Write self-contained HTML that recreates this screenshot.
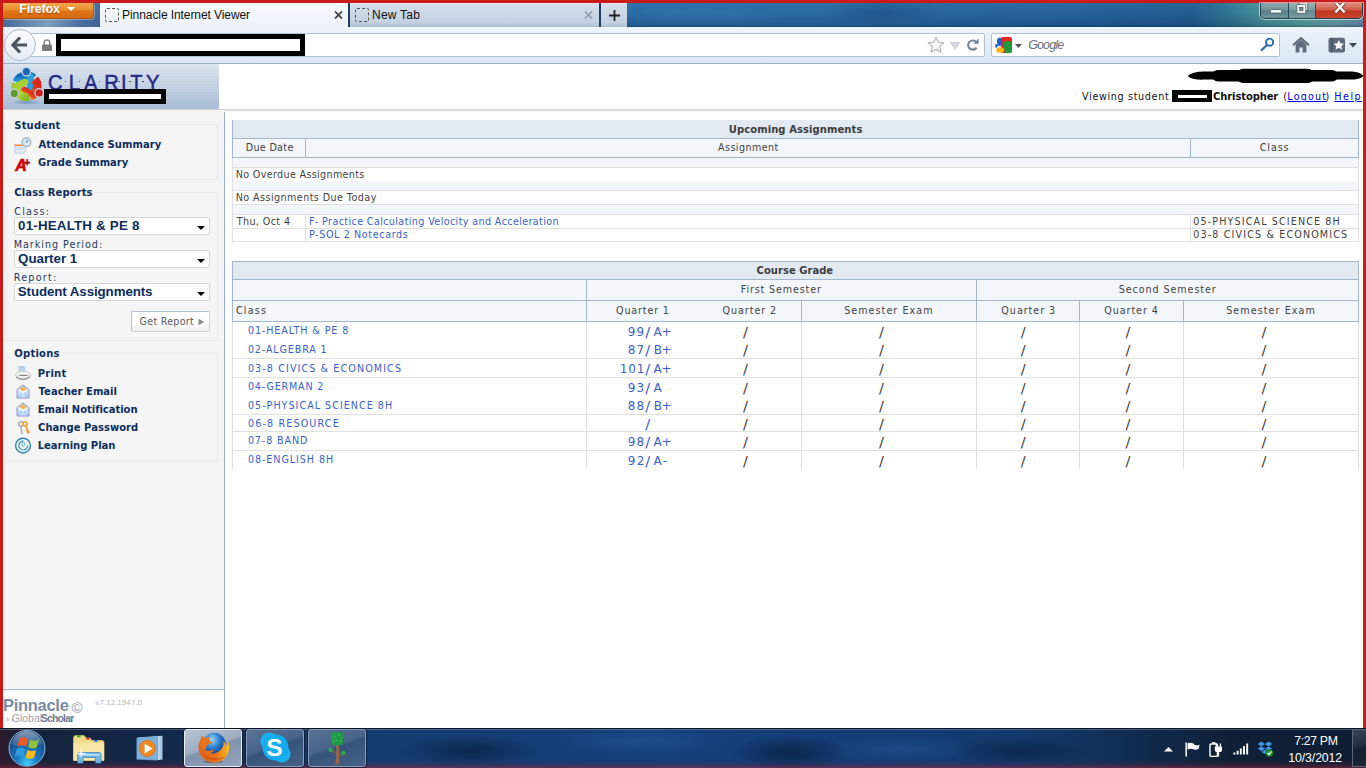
<!DOCTYPE html>
<html><head><meta charset="utf-8"><title>Pinnacle Internet Viewer</title>
<style>
*{box-sizing:border-box;margin:0;padding:0}
html,body{width:1366px;height:768px;overflow:hidden;background:#fff}
body{position:relative;font-family:"DejaVu Sans","Liberation Sans",sans-serif;font-size:10px;color:#333}
div,svg,span.t,i{position:absolute}
span.t{white-space:pre;display:block}
#frame{left:0;top:0;width:1366px;height:768px;background:#cb1a1a}
#titlebar{left:3px;top:3px;width:1360px;height:24px;background:linear-gradient(rgba(255,255,255,.04),rgba(0,0,0,0) 40%,rgba(0,20,50,.18) 92%,rgba(0,20,50,.45)),radial-gradient(ellipse 60px 14px at 880px 8px,rgba(20,70,120,.5),rgba(20,70,120,0)),radial-gradient(ellipse 90px 12px at 700px 14px,rgba(60,130,190,.35),rgba(60,130,190,0)),linear-gradient(90deg,#2a69a2 0,#2b6da6 30%,#2a6aa3 60%,#24619a 80%,#235d90 87.5%,#2d7393 90%,#4a9599 93%,#5ea4a2 96%,#6aa2a8 98%,#6b8eab 100%)}
#navbar{left:3px;top:27px;width:1360px;height:37px;background:linear-gradient(#eef4fb,#e4edf8 40%,#dbe7f5);border-bottom:1px solid #9fb0c6}
#page{left:3px;top:64px;width:1360px;height:664px;background:#fff}
/* ---------- browser chrome ---------- */
#ffbtn{left:3px;top:3px;width:91px;height:16px;border-radius:0 0 4px 0;background:linear-gradient(#f1a84d,#e88e2e 45%,#dd7418 55%,#d96b11);border-right:1px solid #b9591a;border-bottom:1px solid #a8500f;box-shadow:1px 1px 0 rgba(255,255,255,.35)}
#ffbtn i{left:64px;top:4px;border:4px solid transparent;border-top:4.5px solid #fff;border-bottom:0;width:0;height:0}
#ffunder{left:3px;top:19px;width:97px;height:8px;background:linear-gradient(90deg,#47699a,#7f9dbd 45%,#4a6f9f 80%,#3d6294)}
.tab{top:3px;height:24px}
#tab1{left:100px;width:248px;background:linear-gradient(#f6f9fd,#ecf2f9)}
#tab2{left:350px;width:249px;background:linear-gradient(#d4deea,#c5d1e0 80%,#afbdce);border-top:1px solid #e4ebf3}
#tab3{left:601px;width:26px;background:linear-gradient(#d4deea,#c5d1e0 80%,#afbdce);border-top:1px solid #e4ebf3}
.tsep{top:3px;width:2px;height:24px;background:#1d3d63}
.fav{left:5px;top:5px;width:14px;height:14px;border:1px dashed #555;border-radius:2px}
#urlbar{left:26px;top:33px;width:959px;height:24px;background:#fff;border:1px solid #b4c1d2;border-radius:2px}
#back{left:4px;top:29px;width:32px;height:32px;border-radius:50%;background:linear-gradient(#fbfcfe,#e6edf6);border:1px solid #aebaca}
#searchbox{left:991px;top:33px;width:289px;height:24px;background:#fff;border:1px solid #b4c1d2;border-radius:2px}
.blk{background:#000}
.wht{background:#fff}
/* window buttons */
#winbtns{left:1260px;top:3px;width:103px;height:16px;border:1px solid rgba(20,40,60,.75);border-top:0;border-radius:0 0 5px 5px;box-shadow:0 0 0 1px rgba(255,255,255,.55);overflow:hidden}
#winbtns div{top:0;height:15px}
/* ---------- page ---------- */
#hdr{left:3px;top:64px;width:216px;height:45px;background:repeating-linear-gradient(rgba(255,255,255,.10) 0,rgba(255,255,255,.10) 1px,rgba(255,255,255,0) 1px,rgba(255,255,255,0) 2px),linear-gradient(#d8e1eb,#c3d1e2 45%,#a2b8d4)}
#hdrshadow{left:3px;top:109px;width:1360px;height:3px;background:linear-gradient(#c4c4c4,#e6e6e6 50%,#fafafa)}
#side{left:3px;top:110px;width:221px;height:579px;background:#f5f5f5}
#sideline{left:224px;top:112px;width:1px;height:616px;background:#9aadc8}
#sidebot{left:3px;top:689px;width:221px;height:1px;background:#a6b8d0}
.fs{left:6px;width:212px;border:1px solid #ebebeb}
.sel{left:14px;width:196px;height:18px;background:#fff;border:1px solid #d6d6d6;border-radius:2px}
.sel i{right:4px;top:8px;width:0;height:0;border:4px solid transparent;border-top:4px solid #000;border-bottom:0}
#getrep{left:131px;top:311px;width:79px;height:21px;background:linear-gradient(#fff,#fff 55%,#eee);border:1px solid #b5bec9;border-right-color:#d3d3d3;border-bottom-color:#cfcfcf;border-radius:2px}
.hl{height:1px}
.vl{width:1px}
/* ---------- taskbar ---------- */
#taskbar{left:0;top:728px;width:1366px;height:40px;background:linear-gradient(rgba(0,0,0,0) 0,rgba(0,0,0,0) 80%,rgba(130,35,60,.25) 92%,rgba(150,40,60,.55) 100%),radial-gradient(ellipse 70px 16px at 470px 22px,rgba(8,30,62,.7),rgba(8,30,62,0)),radial-gradient(ellipse 90px 14px at 640px 12px,rgba(40,95,160,.45),rgba(40,95,160,0)),radial-gradient(ellipse 60px 18px at 790px 24px,rgba(8,30,62,.75),rgba(8,30,62,0)),radial-gradient(ellipse 80px 14px at 900px 20px,rgba(40,95,160,.4),rgba(40,95,160,0)),radial-gradient(ellipse 70px 16px at 1020px 22px,rgba(8,30,62,.65),rgba(8,30,62,0)),linear-gradient(90deg,#2a1a2c 0,#13233b 2.5%,#13294b 12%,#143c70 27%,#14407a 50%,#133a6e 75%,#102a4c 84%,#0f2036 90%,#101e33 100%);border-top:1px solid #0b1420;box-shadow:inset 0 1px 0 rgba(140,160,190,.45)}
.tb{top:729px;height:38px;border-radius:3px}
</style></head><body>
<div id="frame"></div>
<div id="titlebar"></div>
<div id="navbar"></div>
<div id="page"></div>
<div id="ffunder"></div><div style="left:94px;top:3px;width:6px;height:24px;background:linear-gradient(#4a6e9e,#3f6395)"></div>
<div id="ffbtn"><i></i></div>
<div id="tab1" class="tab"><div class="fav"></div>
<svg style="left:234px;top:8px" width="9" height="8" viewBox="0 0 9 8"><path d="M1 .5L8 7.5M8 .5L1 7.5" stroke="#3a3a3a" stroke-width="1.7" fill="none"/></svg></div>
<div class="tsep" style="left:348px"></div>
<div id="tab2" class="tab"><div class="fav" style="top:4px"></div>
<svg style="left:234px;top:7px" width="9" height="8" viewBox="0 0 9 8"><path d="M1 .5L8 7.5M8 .5L1 7.5" stroke="#8d99a8" stroke-width="1.5" fill="none"/></svg></div>
<div class="tsep" style="left:599px"></div>
<div id="tab3" class="tab"><svg style="left:8px;top:6px" width="11" height="11" viewBox="0 0 11 11"><path d="M5.5 0V11M0 5.5H11" stroke="#222" stroke-width="1.8"/></svg></div>
<div id="winbtns">
<div style="left:0;width:27px;background:linear-gradient(#8fa9ae,#6e8f98 48%,#587e8a 52%,#6d949a)"></div>
<div style="left:27px;width:1px;background:rgba(20,40,60,.7)"></div>
<div style="left:28px;width:26px;background:linear-gradient(#9ab4b6,#779a9f 48%,#5f878f 52%,#78a0a3)"></div>
<div style="left:54px;width:1px;background:rgba(20,40,60,.7)"></div>
<div style="left:55px;width:47px;background:linear-gradient(#e08c7c,#cf5a45 48%,#bf3520 52%,#c9482f)"></div>
<svg style="left:9px;top:6px" width="12" height="5" viewBox="0 0 12 5"><rect x=".5" y=".5" width="11" height="3.6" rx=".8" fill="#f4f4f0" stroke="#4a5a66" stroke-width=".8"/></svg>
<svg style="left:35px;top:0" width="13" height="12" viewBox="0 0 13 12"><rect x="3.2" y="-1" width="8.6" height="8.4" fill="#eef0ee" stroke="#4a5a66" stroke-width=".8"/><rect x=".8" y="1.4" width="9" height="9" rx=".8" fill="#f4f4f0" stroke="#4a5a66" stroke-width=".8"/><rect x="3.6" y="4.4" width="3.4" height="3.2" fill="#6a8c94" stroke="#4a5a66" stroke-width=".7"/></svg>
<svg style="left:72px;top:-1px" width="14" height="12" viewBox="0 0 14 12"><path d="M2.4 .2L11.6 10.4M11.6 .2L2.4 10.4" stroke="#5a3a38" stroke-width="3.8"/><path d="M2.4 .2L11.6 10.4M11.6 .2L2.4 10.4" stroke="#f6f4f0" stroke-width="2.4"/></svg>
</div>
<div id="urlbar"></div>
<div id="back"></div>
<svg style="left:11px;top:36px" width="17" height="18" viewBox="0 0 17 18"><path d="M9 1.5L2 9L9 16.5M2.5 9H16" stroke="#4b5663" stroke-width="3.2" fill="none" stroke-linejoin="miter"/></svg>
<svg style="left:42px;top:39px" width="10" height="12" viewBox="0 0 10 12"><path d="M2.2 6V3.8a2.8 2.8 0 0 1 5.6 0V6" stroke="#8a8a8a" stroke-width="1.6" fill="none"/><rect x="0" y="5.5" width="10" height="6.5" rx="1" fill="#7b7b7b"/></svg>
<div class="blk" style="left:56px;top:34px;width:249px;height:22px"></div>
<div class="wht" style="left:61px;top:39px;width:239px;height:12px"></div>
<svg style="left:927px;top:36px" width="18" height="18" viewBox="0 0 18 18"><path d="M9 1.2l2.35 5.1 5.55.6-4.15 3.75 1.2 5.5L9 13.3l-4.95 2.85 1.2-5.5L1.1 6.9l5.55-.6z" fill="#f6f6f6" stroke="#b4b4b4" stroke-width="1.1" stroke-linejoin="round"/></svg>
<svg style="left:950px;top:42px" width="10" height="8" viewBox="0 0 10 8"><path d="M.5 .5h9L5 7.5z" fill="#d5dbe2" stroke="#b9c1cb" stroke-width=".8"/></svg>
<svg style="left:966px;top:38px" width="14" height="14" viewBox="0 0 14 14"><path d="M10.6 9.6A4.6 4.6 0 1 1 10.2 4" stroke="#76869a" stroke-width="2.1" fill="none"/><path d="M7.2 5.8H12.6V.6z" fill="#76869a"/></svg>
<div id="searchbox"></div>
<svg style="left:995px;top:37px" width="18" height="16" viewBox="0 0 18 16"><rect x="6" y="0" width="11" height="16" rx="2" fill="#e8261e"/><path d="M8 6.5a5 5 0 0 1 9 0V14a2 2 0 0 1-2 2H10z" fill="#1a9a3c"/><ellipse cx="4.6" cy="4.8" rx="2.6" ry="4.2" fill="#2060c8" transform="rotate(-8 4.6 4.8)"/><path d="M.4 6.5L4 8.8.4 11.2z" fill="#2060c8"/><ellipse cx="5.2" cy="13" rx="4" ry="2.8" fill="#f2b417"/></svg>
<svg style="left:1015px;top:44px" width="7" height="4" viewBox="0 0 7 4"><path d="M0 0h7L3.5 4z" fill="#555"/></svg>
<svg style="left:1260px;top:37px" width="15" height="15" viewBox="0 0 15 15"><circle cx="9.6" cy="5.2" r="3.6" stroke="#2b6cb0" stroke-width="1.9" fill="none"/><path d="M7 8L1 13.6" stroke="#2b6cb0" stroke-width="2.2" stroke-linecap="butt"/></svg>
<svg style="left:1292px;top:37px" width="18" height="16" viewBox="0 0 18 16"><path d="M1 8.2L9 1l8 7.2" stroke="#566474" stroke-width="1.9" fill="none"/><path d="M3.6 7.5L9 2.8l5.4 4.7V15.4H10.6V10.4H7.4V15.4H3.6z" fill="#5e6c7c"/></svg>
<svg style="left:1328px;top:37px" width="18" height="16" viewBox="0 0 18 16"><rect x=".5" y=".8" width="16.5" height="14.6" rx="2" fill="#5d6a79"/><rect x="3.4" y=".8" width="1" height="14.6" fill="#3f4a58"/><path d="M10.8 3l1.55 3.3 3.6.4-2.7 2.45.8 3.55-3.25-1.85L7.55 12.7l.8-3.55L5.65 6.7l3.6-.4z" fill="#fff"/></svg>
<svg style="left:1349px;top:43px" width="8" height="5" viewBox="0 0 8 5"><path d="M0 0h8L4 4.6z" fill="#3c4756"/></svg>
<!-- ================= PAGE ================= -->
<div id="hdr"></div>
<div id="hdrshadow"></div>
<div id="side"></div>
<div id="sideline"></div>
<div id="sidebot"></div>
<svg style="left:0;top:60px" width="60" height="50" viewBox="0 60 60 50"><defs><linearGradient id="gb" x1="0" y1="0" x2="0" y2="1"><stop offset="0" stop-color="#1268b8"/><stop offset="1" stop-color="#2aa8e0"/></linearGradient><linearGradient id="gg" x1="0" y1="0" x2="1" y2="1"><stop offset="0" stop-color="#8cbf2a"/><stop offset=".5" stop-color="#b4d432"/><stop offset="1" stop-color="#7fb82c"/></linearGradient><linearGradient id="gr" x1="0" y1="1" x2="1" y2="0"><stop offset="0" stop-color="#f08a1c"/><stop offset=".45" stop-color="#e63a1e"/><stop offset="1" stop-color="#d8261c"/></linearGradient><radialGradient id="gs"><stop offset="0" stop-color="#5f83b5" stop-opacity=".75"/><stop offset="1" stop-color="#5f83b5" stop-opacity="0"/></radialGradient></defs><ellipse cx="26.5" cy="102.3" rx="16" ry="2.6" fill="url(#gs)"/><path d="M16.66 82.08A10.8 10.8 0 0 1 33.40 77.91" stroke="url(#gb)" stroke-width="8.4" fill="none"/><path d="M30.65 76.29Q30.60 83.30 30.00 87.50" stroke="#2aa0dc" stroke-width="6.6" fill="none" stroke-linecap="round"/><path d="M34.75 79.21A10.8 10.8 0 0 1 29.94 96.57" stroke="url(#gr)" stroke-width="8.4" fill="none"/><path d="M32.79 95.15Q27.60 92.30 24.40 89.90" stroke="url(#gr)" stroke-width="6.6" fill="none" stroke-linecap="round"/><path d="M28.85 96.86A10.8 10.8 0 0 1 16.12 83.69" stroke="url(#gg)" stroke-width="8.4" fill="none"/><path d="M15.81 86.68Q21.60 83.30 25.00 82.10" stroke="#a6cf30" stroke-width="6.6" fill="none" stroke-linecap="round"/><circle cx="26.35" cy="71.70" r="4.9" fill="#c9d6e6"/><circle cx="26.35" cy="71.70" r="3.6" fill="#1468b4"/><circle cx="14.30" cy="93.40" r="4.9" fill="#c9d6e6"/><circle cx="14.30" cy="93.40" r="3.6" fill="#5f9a2a"/><circle cx="39.18" cy="92.88" r="4.9" fill="#c9d6e6"/><circle cx="39.18" cy="92.88" r="3.6" fill="#cc241c"/></svg>
<svg style="left:40px;top:66px" width="125" height="30" viewBox="40 66 125 30"><text transform="scale(.92 1)" x="52.22 74.61 91.35 113.41 131.57 141.57 158.74" y="90.2" font-family="Liberation Sans, sans-serif" font-size="22" fill="#262a86" stroke="#262a86" stroke-width=".5">CLARITY</text></svg>
<div style="left:64.6px;top:80.7px;width:1.8px;height:1.8px;border-radius:50%;background:#3a3e4a"></div>
<div style="left:78.7px;top:80.7px;width:1.8px;height:1.8px;border-radius:50%;background:#3a3e4a"></div>
<div style="left:98.6px;top:80.7px;width:1.8px;height:1.8px;border-radius:50%;background:#3a3e4a"></div>
<div style="left:118.2px;top:80.7px;width:1.8px;height:1.8px;border-radius:50%;background:#3a3e4a"></div>
<div style="left:129.2px;top:80.7px;width:1.8px;height:1.8px;border-radius:50%;background:#3a3e4a"></div>
<div style="left:142.4px;top:80.7px;width:1.8px;height:1.8px;border-radius:50%;background:#3a3e4a"></div>
<div style="left:44px;top:89px;width:122px;height:15px;background:#000;z-index:5"></div>
<div style="left:49px;top:94px;width:112px;height:5px;background:#fff;z-index:6"></div>
<svg style="left:1180px;top:64px" width="183" height="24" viewBox="1180 64 183 24"><path d="M1187.8 75.9Q1192 71.6 1204 71.4H1352Q1360 72 1363 75.5V76.5Q1360 79.6 1350 79.6H1204Q1192 80 1187.8 75.9Z" fill="#000"/><rect x="1212" y="70" width="126" height="11.5" rx="5.7" fill="#000"/><rect x="1237" y="68.7" width="77" height="14.2" rx="6" fill="#000"/></svg>
<div style="left:1172px;top:90px;width:40px;height:12px;background:#000;"></div>
<div style="left:1178px;top:95px;width:29px;height:3px;background:#fff;"></div>
<div class="fs" style="top:124px;height:56px"></div>
<div class="fs" style="top:192px;height:149px"></div>
<div class="fs" style="top:353px;height:109px"></div>
<div style="left:12px;top:120px;width:51px;height:10px;background:#f5f5f5;"></div>
<div style="left:12px;top:188px;width:83px;height:10px;background:#f5f5f5;"></div>
<div style="left:12px;top:349px;width:50px;height:10px;background:#f5f5f5;"></div>
<div class="sel" style="top:217px"><i></i></div>
<div class="sel" style="top:250px"><i></i></div>
<div class="sel" style="top:283px"><i></i></div>
<div id="getrep"></div>
<svg style="left:198px;top:318px" width="7" height="8" viewBox="0 0 7 8"><path d="M.5 .8L6.2 4 .5 7.2z" fill="#8a8a8a"/></svg>
<svg style="left:14px;top:137px" width="19" height="18" viewBox="0 0 19 18"><path d="M.8 8.4H11.5V14.2L9 16.2H.8z" fill="#e4ecf5" stroke="#b5c3d6" stroke-width=".8"/><path d="M.6 8.2H11.6" stroke="#f08a3c" stroke-width="1.5"/><path d="M2.5 11h7M2.5 13h6" stroke="#c3cfdf" stroke-width="1"/><circle cx="12.4" cy="5.2" r="4.4" fill="#cfe7f3" stroke="#a3acb6" stroke-width="1.2"/><path d="M12.3 5.4L14 2.9" stroke="#596470" stroke-width="1"/></svg>
<svg style="left:16px;top:384px" width="14" height="15" viewBox="0 0 14 15"><path d="M1 5.6L7 1 13 5.6V14H1z" fill="#c6e2f8" stroke="#8a8ad8" stroke-width=".9" stroke-linejoin="round"/><path d="M2.6 5.4L7 2.2 11.4 5.4 7 8z" fill="#f3b65a"/><path d="M2.4 6.2L7 9.2 11.6 6.2V4.8L7 7.4 2.4 4.8z" fill="#fff" opacity=".85"/><path d="M1 14L5.6 9.6M13 14L8.4 9.6" stroke="#8a9ae0" stroke-width=".8"/></svg>
<svg style="left:16px;top:402px" width="14" height="15" viewBox="0 0 14 15"><path d="M1 5.6L7 1 13 5.6V14H1z" fill="#c6e2f8" stroke="#8a8ad8" stroke-width=".9" stroke-linejoin="round"/><path d="M2.6 5.4L7 2.2 11.4 5.4 7 8z" fill="#f3b65a"/><path d="M2.4 6.2L7 9.2 11.6 6.2V4.8L7 7.4 2.4 4.8z" fill="#fff" opacity=".85"/><path d="M1 14L5.6 9.6M13 14L8.4 9.6" stroke="#8a9ae0" stroke-width=".8"/></svg>
<svg style="left:15px;top:366px" width="16" height="15" viewBox="0 0 16 15"><path d="M3.4 .6H9.2L10.6 6.4H4.4z" fill="#b9d6f2" stroke="#9fb9d8" stroke-width=".5"/><ellipse cx="8" cy="9" rx="7.4" ry="4" fill="#f1f1f1" stroke="#b5b5b5" stroke-width=".7"/><path d="M1 10.2Q8 15.6 15 10.2V11.6Q8 16.6 1 11.6z" fill="#8c8c8c"/><path d="M4.4 9.4H11.6" stroke="#777" stroke-width="1.1"/><circle cx="12.6" cy="9.6" r=".6" fill="#3a9a3a"/></svg>
<svg style="left:17px;top:421px" width="14" height="14" viewBox="0 0 14 14"><circle cx="3.8" cy="3" r="2.2" fill="none" stroke="#a9aeb6" stroke-width="1.5"/><path d="M4 5.2L4.8 13" stroke="#a9aeb6" stroke-width="1.6"/><circle cx="8" cy="2.8" r="2.1" fill="none" stroke="#f0a92e" stroke-width="1.6"/><path d="M8.6 4.8L12.2 12.2M10.6 9.2L8.8 10.2M11.6 11L10 12" stroke="#ee9f22" stroke-width="1.5"/></svg>
<svg style="left:14px;top:437px" width="18" height="18" viewBox="0 0 18 18"><circle cx="9" cy="8.6" r="7.4" fill="#eef6fa" stroke="#2e86a8" stroke-width="1.4"/><path d="M13.6 8.2A4.4 4.4 0 1 1 9.6 4.2" fill="none" stroke="#3d93b3" stroke-width="1.2"/><circle cx="9.3" cy="7.2" r="1.6" fill="none" stroke="#5aa6c2" stroke-width=".9"/></svg>
<div style="left:232px;top:120px;width:1127px;height:18px;background:#e2e9f1;"></div>
<div style="left:232px;top:139px;width:1127px;height:18px;background:#f3f6fa;"></div>
<div style="left:232px;top:138px;width:1127px;height:1px;background:#a3b7cf;"></div>
<div style="left:232px;top:157px;width:1127px;height:1px;background:#a3b7cf;"></div>
<div style="left:232px;top:120px;width:1px;height:38px;background:#a3b7cf;"></div>
<div style="left:1358px;top:120px;width:1px;height:38px;background:#a3b7cf;"></div>
<div style="left:305px;top:139px;width:1px;height:18px;background:#a3b7cf;"></div>
<div style="left:1190px;top:139px;width:1px;height:18px;background:#a3b7cf;"></div>
<div style="left:233px;top:158px;width:1125px;height:9px;background:#f3f6fa;"></div>
<div style="left:233px;top:181px;width:1125px;height:9px;background:#f3f6fa;"></div>
<div style="left:233px;top:205px;width:1125px;height:9px;background:#f3f6fa;"></div>
<div style="left:232px;top:167px;width:1127px;height:1px;background:#e0e0e0;"></div>
<div style="left:232px;top:190px;width:1127px;height:1px;background:#e0e0e0;"></div>
<div style="left:232px;top:204px;width:1127px;height:1px;background:#e0e0e0;"></div>
<div style="left:232px;top:214px;width:1127px;height:1px;background:#e0e0e0;"></div>
<div style="left:232px;top:228px;width:1127px;height:1px;background:#e0e0e0;"></div>
<div style="left:232px;top:241px;width:1127px;height:1px;background:#e0e0e0;"></div>
<div style="left:232px;top:158px;width:1px;height:84px;background:#e0e0e0;"></div>
<div style="left:1358px;top:158px;width:1px;height:84px;background:#e0e0e0;"></div>
<div style="left:305px;top:215px;width:1px;height:26px;background:#e0e0e0;"></div>
<div style="left:1190px;top:215px;width:1px;height:26px;background:#e0e0e0;"></div>
<div style="left:232px;top:261px;width:1127px;height:18px;background:#e2e9f1;"></div>
<div style="left:232px;top:280px;width:1127px;height:41px;background:#f3f6fa;"></div>
<div style="left:232px;top:261px;width:1127px;height:1px;background:#a3b7cf;"></div>
<div style="left:232px;top:279px;width:1127px;height:1px;background:#a3b7cf;"></div>
<div style="left:232px;top:300px;width:1127px;height:1px;background:#a3b7cf;"></div>
<div style="left:232px;top:321px;width:1127px;height:1px;background:#a3b7cf;"></div>
<div style="left:232px;top:261px;width:1px;height:61px;background:#a3b7cf;"></div>
<div style="left:1358px;top:261px;width:1px;height:61px;background:#a3b7cf;"></div>
<div style="left:586px;top:280px;width:1px;height:41px;background:#a3b7cf;"></div>
<div style="left:976px;top:280px;width:1px;height:41px;background:#a3b7cf;"></div>
<div style="left:801px;top:301px;width:1px;height:20px;background:#a3b7cf;"></div>
<div style="left:1079px;top:301px;width:1px;height:20px;background:#a3b7cf;"></div>
<div style="left:1183px;top:301px;width:1px;height:20px;background:#a3b7cf;"></div>
<div style="left:232px;top:358px;width:1127px;height:1px;background:#e0e0e0;"></div>
<div style="left:232px;top:377px;width:1127px;height:1px;background:#e0e0e0;"></div>
<div style="left:232px;top:414px;width:1127px;height:1px;background:#e0e0e0;"></div>
<div style="left:232px;top:431px;width:1127px;height:1px;background:#e0e0e0;"></div>
<div style="left:232px;top:450px;width:1127px;height:1px;background:#e0e0e0;"></div>
<div style="left:232px;top:322px;width:1px;height:147px;background:#e0e0e0;"></div>
<div style="left:586px;top:322px;width:1px;height:147px;background:#e0e0e0;"></div>
<div style="left:801px;top:322px;width:1px;height:147px;background:#e0e0e0;"></div>
<div style="left:976px;top:322px;width:1px;height:147px;background:#e0e0e0;"></div>
<div style="left:1079px;top:322px;width:1px;height:147px;background:#e0e0e0;"></div>
<div style="left:1183px;top:322px;width:1px;height:147px;background:#e0e0e0;"></div>
<div style="left:1358px;top:322px;width:1px;height:147px;background:#e0e0e0;"></div>
<div id="taskbar"></div>
<div class="tb" style="left:184px;width:58px;background:linear-gradient(160deg,#b9c4d3 0,#9fadc2 45%,#8193ad 50%,#93a4bb 100%);border:1px solid #e9eef5;box-shadow:0 0 0 1px rgba(10,20,40,.6)"></div>
<div class="tb" style="left:246px;width:58px;background:linear-gradient(160deg,#5a7396 0,#48638a 45%,#385379 50%,#46628a 100%);border:1px solid #8a9cb6;box-shadow:0 0 0 1px rgba(10,20,40,.6)"></div>
<div class="tb" style="left:308px;width:58px;background:linear-gradient(160deg,#5a7396 0,#48638a 45%,#385379 50%,#46628a 100%);border:1px solid #8a9cb6;box-shadow:0 0 0 1px rgba(10,20,40,.6)"></div>
<svg style="left:6px;top:728px" width="42" height="40" viewBox="0 0 42 40"><defs><radialGradient id="orb" cx=".5" cy=".92" r=".95"><stop offset="0" stop-color="#3fd0f8"/><stop offset=".3" stop-color="#1c7cc6"/><stop offset=".7" stop-color="#174f92"/><stop offset="1" stop-color="#0f3566"/></radialGradient><linearGradient id="orbh" x1="0" y1="0" x2="0" y2="1"><stop offset="0" stop-color="#fff" stop-opacity=".5"/><stop offset="1" stop-color="#fff" stop-opacity=".05"/></linearGradient></defs>
<circle cx="21" cy="20.2" r="18" fill="url(#orb)" stroke="#8fb4d8" stroke-width="1"/><path d="M5.2 16.4A16 16 0 0 1 36.8 16.4Q21 22 5.2 16.4z" fill="url(#orbh)"/>
<g transform="translate(21 20) scale(1.22) translate(-19.6 -20)"><path d="M13.4 12.2Q17 10 20.4 12.4L18.8 19Q15.4 16.8 11.8 18.8z" fill="#ee5a22"/><path d="M22.2 13Q25.6 15 29.4 13L27.6 19.6Q24 21.4 20.6 19.4z" fill="#8cc43c"/><path d="M11.2 20.6Q14.8 18.6 18.2 20.8L16.6 27.2Q13.2 25 9.6 27z" fill="#2f9be0"/><path d="M20 21.4Q23.4 23.4 27.2 21.6L25.4 28Q21.8 29.8 18.4 27.8z" fill="#f7b81e"/></g></svg>
<svg style="left:72px;top:733px" width="34" height="32" viewBox="0 0 34 32"><path d="M1.5 5.5Q1.5 2.5 4 2.5H12L14 5H18L20 7.5H30Q32 7.5 32 9.5V27.5H1.5z" fill="#f3d98a" stroke="#d8b75a" stroke-width=".8"/><rect x="5" y="2.2" width="3.6" height="2" fill="#19b32a"/><rect x="14.4" y="4.6" width="3" height="2" fill="#d8281e"/><rect x="22.4" y="7" width="3" height="2" fill="#1e7fe0"/><path d="M1.5 10H32V27.5H1.5z" fill="#f7e6a6"/><path d="M5.5 30V21.5Q5.5 19.5 7.5 19.5H27Q29 19.5 29 21.5V30H23.5V24.5H11V30z" fill="#6fb6e6" stroke="#3d88c4" stroke-width=".8"/><path d="M6.5 21.8H28" stroke="#c8e8fa" stroke-width="1.4"/><path d="M9 14L9.8 19.5 15 20.4 9.8 21.2 9 26.5 8.2 21.2 3.4 20.4 8.2 19.5z" fill="#fff" opacity=".9"/></svg>
<svg style="left:136px;top:735px" width="28" height="27" viewBox="0 0 28 27"><path d="M4 2.2L26.5 .8V24.8L4 23.4z" fill="#a8c8e4"/><path d="M2.4 2.6L24 1.4V25L2.4 23.8z" fill="#b9d5ec"/><path d="M.8 3L21.5 2V25.2L.8 24.2z" fill="#7fb0dc" stroke="#5f96c8" stroke-width=".6"/><circle cx="11.4" cy="13.4" r="8" fill="#f28a1e" stroke="#d86a10" stroke-width=".8"/><path d="M8.6 8.4L16.6 13.4 8.6 18.4z" fill="#fff"/></svg>
<svg style="left:197px;top:731px" width="34" height="33" viewBox="0 0 34 33"><defs><radialGradient id="ffg" cx=".4" cy=".3" r=".75"><stop offset="0" stop-color="#9ad8f8"/><stop offset=".45" stop-color="#2f7fd0"/><stop offset="1" stop-color="#0c2f7c"/></radialGradient><linearGradient id="ffo" x1="0" y1="0" x2="1" y2="0"><stop offset="0" stop-color="#e2621a"/><stop offset=".55" stop-color="#e8741a"/><stop offset=".85" stop-color="#f3a01c"/><stop offset="1" stop-color="#f6c428"/></linearGradient></defs>
<ellipse cx="16.5" cy="30.6" rx="10" ry="1.6" fill="#1a2436" opacity=".35"/>
<circle cx="17.2" cy="13.4" r="11.6" fill="url(#ffg)"/>
<path d="M3.6 8.5A15.4 15.4 0 1 0 29.6 7.8Q31 11.5 29.8 15.2 28.6 11.6 26.4 9.8A10.8 10.8 0 0 1 8.6 19.6Q6.6 15 8.8 11.4z" fill="url(#ffo)"/>
<path d="M3.4 10L4.8 4.2 8.2 7.6 12.6 5.6 12 9.6 15.6 11.8 11.4 13.2Q8.6 15.4 8.2 19L3.6 16z" fill="#e9741c"/>
<path d="M8 19.2Q12.4 20.8 15.8 18.4L16.6 20.2Q13 23.8 8.6 22.6z" fill="#e8701a"/>
<path d="M5 22Q10 30 19 29.6 25 29 28.6 24.4 24 27.4 18 27 10 26.6 5 22z" fill="#c8400e" opacity=".55"/></svg>
<svg style="left:259px;top:731px" width="33" height="33" viewBox="0 0 33 33"><circle cx="10" cy="10" r="8.6" fill="#1ab2f2"/><circle cx="23" cy="23" r="8.6" fill="#1ab2f2"/><circle cx="16.5" cy="16.5" r="13" fill="#12aef0"/></svg>
<svg style="left:327px;top:731px" width="20" height="34" viewBox="0 0 20 34"><path d="M9.2 12H12V33H8.4L9.4 26z" fill="#9a6a48"/><path d="M8.6 31.6L6.8 33.4H13.8L12 31.6z" fill="#8a5c3e"/><path d="M9.4 22L5 19.6M11.8 25L15 22.6" stroke="#8a5c3e" stroke-width="1.4"/><path d="M4 5Q4 1 8 1H12.4Q16 1 16 5V10Q16 14.4 12 14.4H8Q4 14.4 4 10z" fill="#1f9a48"/><path d="M6 4.6h2v2H6zM11 3h2v2h-2zM8.6 8h2v2h-2zM12.6 9h2v2h-2zM5.4 10h2v2h-2z" fill="#2fb85c"/><circle cx="3.6" cy="19" r="2.2" fill="#27a64e"/><circle cx="16.4" cy="22" r="2.2" fill="#27a64e"/></svg>
<svg style="left:1164px;top:747px" width="9" height="5" viewBox="0 0 9 5"><path d="M0 4.6L4.5 0 9 4.6z" fill="#fff"/></svg>
<svg style="left:1185px;top:742px" width="16" height="15" viewBox="0 0 16 15"><path d="M1.2 .4V14.6" stroke="#fff" stroke-width="1.5"/><path d="M2.6 1.2Q5.6 .2 8.4 1.6 9 3 11.6 3.4L14.6 2.8 13.6 6.8Q10.6 8.6 8.6 7.2 6 6 2.6 7.4z" fill="#fff"/></svg>
<svg style="left:1209px;top:741px" width="15" height="17" viewBox="0 0 15 17"><rect x="1" y="3" width="7.4" height="12.4" rx="1" fill="none" stroke="#fff" stroke-width="1.4"/><rect x="3" y="1.2" width="3.4" height="1.6" fill="#fff"/><path d="M7.4 2.6V5.4M11.4 2.6V5.4" stroke="#fff" stroke-width="1.4"/><path d="M5.8 5.4H13V8.4Q13 11 10.6 11H8.2Q5.8 11 5.8 8.4z" fill="#fff"/><path d="M9.4 11V15.6" stroke="#fff" stroke-width="1.5"/></svg>
<svg style="left:1233px;top:743px" width="16" height="12" viewBox="0 0 16 12"><path d="M1.4 11.4V9.6M4.6 11.4V7.8M7.8 11.4V5.6M11 11.4V3M14.2 11.4V.6" stroke="#fff" stroke-width="1.9"/></svg>
<svg style="left:1257px;top:741px" width="17" height="16" viewBox="0 0 17 16"><path d="M4.4 .6L8 3 4.4 5.4.8 3zM11.6 .6L15.2 3 11.6 5.4 8 3zM.8 7.6L4.4 5.4 8 7.8 4.4 10.2zM15.2 7.6L11.6 5.4 8 7.8 11.6 10.2zM4.6 11L8 8.8 11.4 11 8 13.2z" fill="#3d9ae8"/><circle cx="12.4" cy="12" r="3.6" fill="#1e9a2c" stroke="#0d6a18" stroke-width=".5"/><path d="M10.6 12L12 13.6 14.4 10.4" stroke="#fff" stroke-width="1.2" fill="none"/></svg>
<div style="left:1352px;top:729px;width:14px;height:38px;background:linear-gradient(160deg,#3a4656 0,#1e2a3a 50%,#141e2c 52%,#1c2636 100%);border:1px solid #5a6676;border-right:0"></div>
<span class="t" style='left:19.21px;top:0.87px;font:normal bold 12.5px/16px "Liberation Sans","DejaVu Sans",sans-serif;color:#fff;letter-spacing:-0.135px;text-shadow:0 1px 1px rgba(120,50,0,.55);'>Firefox</span>
<span class="t" style='left:122.10px;top:6.84px;font:normal normal 12px/16px "Liberation Sans","DejaVu Sans",sans-serif;color:#111;letter-spacing:-0.081px;'>Pinnacle Internet Viewer</span>
<span class="t" style='left:372.08px;top:6.84px;font:normal normal 12px/16px "Liberation Sans","DejaVu Sans",sans-serif;color:#111;letter-spacing:0.224px;'>New Tab</span>
<span class="t" style='left:1028.16px;top:37.07px;font:italic normal 12.5px/16px "Liberation Sans","DejaVu Sans",sans-serif;color:#6a7078;letter-spacing:-0.855px;'>Google</span>
<span class="t" style='left:1082.06px;top:90.68px;font:normal normal 9.6px/12px "DejaVu Sans","Liberation Sans",sans-serif;color:#111;letter-spacing:0.664px;'>Viewing student</span>
<span class="t" style='left:1213.04px;top:90.04px;font:normal bold 10px/13px "DejaVu Sans","Liberation Sans",sans-serif;color:#111;letter-spacing:-0.117px;'>Christopher</span>
<span class="t" style='left:1283.29px;top:90.68px;font:normal normal 9.6px/12px "DejaVu Sans","Liberation Sans",sans-serif;color:#111;letter-spacing:0.000px;'>(</span>
<span class="t" style='left:1287.33px;top:90.68px;font:normal normal 9.6px/12px "DejaVu Sans","Liberation Sans",sans-serif;color:#0000ee;letter-spacing:1.149px;text-decoration:underline;'>Logout</span>
<span class="t" style='left:1325.62px;top:90.68px;font:normal normal 9.6px/12px "DejaVu Sans","Liberation Sans",sans-serif;color:#111;letter-spacing:0.000px;'>)</span>
<span class="t" style='left:1334.33px;top:90.68px;font:normal normal 9.6px/12px "DejaVu Sans","Liberation Sans",sans-serif;color:#0000ee;letter-spacing:1.469px;text-decoration:underline;'>Help</span>
<span class="t" style='left:14.25px;top:119.04px;font:normal bold 10px/13px "DejaVu Sans","Liberation Sans",sans-serif;color:#0c2d5e;letter-spacing:0.189px;'>Student</span>
<span class="t" style='left:38.48px;top:138.04px;font:normal bold 10px/13px "DejaVu Sans","Liberation Sans",sans-serif;color:#0c2d5e;letter-spacing:0.061px;'>Attendance Summary</span>
<span class="t" style='left:38.04px;top:156.04px;font:normal bold 10px/13px "DejaVu Sans","Liberation Sans",sans-serif;color:#0c2d5e;letter-spacing:-0.044px;'>Grade Summary</span>
<span class="t" style='left:14.36px;top:186.04px;font:normal bold 10px/13px "DejaVu Sans","Liberation Sans",sans-serif;color:#0c2d5e;letter-spacing:0.092px;'>Class Reports</span>
<span class="t" style='left:14.20px;top:205.68px;font:normal normal 9.6px/12px "DejaVu Sans","Liberation Sans",sans-serif;color:#1f3a60;letter-spacing:1.254px;'>Class:</span>
<span class="t" style='left:18.04px;top:216.98px;font:normal bold 13.33px/17px "Liberation Sans","DejaVu Sans",sans-serif;color:#0c2d5e;letter-spacing:0.202px;'>01-HEALTH &amp; PE 8</span>
<span class="t" style='left:13.69px;top:238.68px;font:normal normal 9.6px/12px "DejaVu Sans","Liberation Sans",sans-serif;color:#1f3a60;letter-spacing:0.984px;'>Marking Period:</span>
<span class="t" style='left:18.02px;top:250.38px;font:normal bold 13.33px/17px "Liberation Sans","DejaVu Sans",sans-serif;color:#0c2d5e;letter-spacing:-0.003px;'>Quarter 1</span>
<span class="t" style='left:13.71px;top:271.68px;font:normal normal 9.6px/12px "DejaVu Sans","Liberation Sans",sans-serif;color:#1f3a60;letter-spacing:1.245px;'>Report:</span>
<span class="t" style='left:17.81px;top:283.38px;font:normal bold 13.33px/17px "Liberation Sans","DejaVu Sans",sans-serif;color:#0c2d5e;letter-spacing:-0.101px;'>Student Assignments</span>
<span class="t" style='left:139.60px;top:316.28px;font:normal normal 9.6px/12px "DejaVu Sans","Liberation Sans",sans-serif;color:#5a5a5a;letter-spacing:0.243px;'>Get Report</span>
<span class="t" style='left:14.36px;top:347.04px;font:normal bold 10px/13px "DejaVu Sans","Liberation Sans",sans-serif;color:#0c2d5e;letter-spacing:0.206px;'>Options</span>
<span class="t" style='left:37.73px;top:367.04px;font:normal bold 10px/13px "DejaVu Sans","Liberation Sans",sans-serif;color:#0c2d5e;letter-spacing:0.233px;'>Print</span>
<span class="t" style='left:38.62px;top:385.04px;font:normal bold 10px/13px "DejaVu Sans","Liberation Sans",sans-serif;color:#0c2d5e;letter-spacing:0.020px;'>Teacher Email</span>
<span class="t" style='left:37.73px;top:403.04px;font:normal bold 10px/13px "DejaVu Sans","Liberation Sans",sans-serif;color:#0c2d5e;letter-spacing:-0.034px;'>Email Notification</span>
<span class="t" style='left:38.04px;top:421.04px;font:normal bold 10px/13px "DejaVu Sans","Liberation Sans",sans-serif;color:#0c2d5e;letter-spacing:0.039px;'>Change Password</span>
<span class="t" style='left:37.73px;top:439.04px;font:normal bold 10px/13px "DejaVu Sans","Liberation Sans",sans-serif;color:#0c2d5e;letter-spacing:0.000px;'>Learning Plan</span>
<span class="t" style='left:2.99px;top:694.78px;font:normal bold 16.5px/21px "Liberation Sans","DejaVu Sans",sans-serif;color:#7b8ba3;letter-spacing:-0.287px;'>Pinnacle</span>
<span class="t" style='left:6.76px;top:717.24px;font:normal normal 4.5px/6px "Liberation Sans","DejaVu Sans",sans-serif;color:#98a2b0;letter-spacing:1.955px;'>by</span>
<span class="t" style='left:11.73px;top:711.16px;font:normal normal 10.5px/14px "Liberation Sans","DejaVu Sans",sans-serif;color:#9aa4b2;letter-spacing:0.005px;'>Global</span>
<span class="t" style='left:40.87px;top:711.16px;font:normal bold 10.5px/14px "Liberation Sans","DejaVu Sans",sans-serif;color:#6f7b8e;letter-spacing:-0.858px;'>Scholar</span>
<span class="t" style='left:71.53px;top:698.40px;font:normal normal 15px/20px "Liberation Sans","DejaVu Sans",sans-serif;color:#8c9bb0;letter-spacing:0.000px;'>©</span>
<span class="t" style='left:95.34px;top:699.28px;font:normal normal 7px/9px "DejaVu Sans","Liberation Sans",sans-serif;color:#b4b4b4;letter-spacing:0.008px;'>v7.12.1947.0</span>
<span class="t" style='left:15.33px;top:154.66px;font:italic bold 16px/21px "Liberation Sans","DejaVu Sans",sans-serif;color:#d40808;letter-spacing:0.000px;-webkit-text-stroke:.7px #d40808;'>A</span>
<span class="t" style='left:24.08px;top:154.79px;font:normal bold 11px/14px "Liberation Sans","DejaVu Sans",sans-serif;color:#a30505;letter-spacing:0.000px;-webkit-text-stroke:.4px #a30505;'>+</span>
<span class="t" style='left:728.73px;top:123.04px;font:normal bold 10px/13px "DejaVu Sans","Liberation Sans",sans-serif;color:#3d3d3d;letter-spacing:0.083px;'>Upcoming Assignments</span>
<span class="t" style='left:245.73px;top:141.68px;font:normal normal 9.6px/12px "DejaVu Sans","Liberation Sans",sans-serif;color:#424242;letter-spacing:0.319px;'>Due Date</span>
<span class="t" style='left:718.06px;top:141.68px;font:normal normal 9.6px/12px "DejaVu Sans","Liberation Sans",sans-serif;color:#424242;letter-spacing:0.421px;'>Assignment</span>
<span class="t" style='left:1259.73px;top:141.68px;font:normal normal 9.6px/12px "DejaVu Sans","Liberation Sans",sans-serif;color:#424242;letter-spacing:0.912px;'>Class</span>
<span class="t" style='left:235.72px;top:168.68px;font:normal normal 9.6px/12px "DejaVu Sans","Liberation Sans",sans-serif;color:#424242;letter-spacing:0.333px;'>No Overdue Assignments</span>
<span class="t" style='left:235.72px;top:191.68px;font:normal normal 9.6px/12px "DejaVu Sans","Liberation Sans",sans-serif;color:#424242;letter-spacing:0.426px;'>No Assignments Due Today</span>
<span class="t" style='left:236.70px;top:215.68px;font:normal normal 9.6px/12px "DejaVu Sans","Liberation Sans",sans-serif;color:#424242;letter-spacing:0.385px;'>Thu, Oct 4</span>
<span class="t" style='left:308.91px;top:215.68px;font:normal normal 9.6px/12px "DejaVu Sans","Liberation Sans",sans-serif;color:#3a5fcd;letter-spacing:0.378px;'>F- Practice Calculating Velocity and Acceleration</span>
<span class="t" style='left:308.91px;top:228.68px;font:normal normal 9.6px/12px "DejaVu Sans","Liberation Sans",sans-serif;color:#3a5fcd;letter-spacing:0.617px;'>P-SOL 2 Notecards</span>
<span class="t" style='left:1193.33px;top:215.68px;font:normal normal 9.6px/12px "DejaVu Sans","Liberation Sans",sans-serif;color:#424242;letter-spacing:1.112px;'>05-PHYSICAL SCIENCE 8H</span>
<span class="t" style='left:1193.33px;top:228.68px;font:normal normal 9.6px/12px "DejaVu Sans","Liberation Sans",sans-serif;color:#424242;letter-spacing:1.125px;'>03-8 CIVICS &amp; ECONOMICS</span>
<span class="t" style='left:756.62px;top:264.04px;font:normal bold 10px/13px "DejaVu Sans","Liberation Sans",sans-serif;color:#3d3d3d;letter-spacing:0.017px;'>Course Grade</span>
<span class="t" style='left:740.73px;top:283.68px;font:normal normal 9.6px/12px "DejaVu Sans","Liberation Sans",sans-serif;color:#424242;letter-spacing:0.853px;'>First Semester</span>
<span class="t" style='left:1118.67px;top:283.68px;font:normal normal 9.6px/12px "DejaVu Sans","Liberation Sans",sans-serif;color:#424242;letter-spacing:0.925px;'>Second Semester</span>
<span class="t" style='left:235.93px;top:304.68px;font:normal normal 9.6px/12px "DejaVu Sans","Liberation Sans",sans-serif;color:#424242;letter-spacing:1.187px;'>Class</span>
<span class="t" style='left:616.01px;top:304.68px;font:normal normal 9.6px/12px "DejaVu Sans","Liberation Sans",sans-serif;color:#424242;letter-spacing:0.835px;'>Quarter 1</span>
<span class="t" style='left:722.60px;top:304.68px;font:normal normal 9.6px/12px "DejaVu Sans","Liberation Sans",sans-serif;color:#424242;letter-spacing:0.916px;'>Quarter 2</span>
<span class="t" style='left:844.16px;top:304.68px;font:normal normal 9.6px/12px "DejaVu Sans","Liberation Sans",sans-serif;color:#424242;letter-spacing:1.039px;'>Semester Exam</span>
<span class="t" style='left:1001.37px;top:304.68px;font:normal normal 9.6px/12px "DejaVu Sans","Liberation Sans",sans-serif;color:#424242;letter-spacing:0.943px;'>Quarter 3</span>
<span class="t" style='left:1104.37px;top:304.68px;font:normal normal 9.6px/12px "DejaVu Sans","Liberation Sans",sans-serif;color:#424242;letter-spacing:0.909px;'>Quarter 4</span>
<span class="t" style='left:1226.16px;top:304.68px;font:normal normal 9.6px/12px "DejaVu Sans","Liberation Sans",sans-serif;color:#424242;letter-spacing:1.072px;'>Semester Exam</span>
<span class="t" style='left:247.92px;top:324.68px;font:normal normal 9.6px/12px "DejaVu Sans","Liberation Sans",sans-serif;color:#3a5fcd;letter-spacing:0.879px;'>01-HEALTH &amp; PE 8</span>
<span class="t" style='left:247.92px;top:343.68px;font:normal normal 9.6px/12px "DejaVu Sans","Liberation Sans",sans-serif;color:#3a5fcd;letter-spacing:0.850px;'>02-ALGEBRA 1</span>
<span class="t" style='left:247.92px;top:362.68px;font:normal normal 9.6px/12px "DejaVu Sans","Liberation Sans",sans-serif;color:#3a5fcd;letter-spacing:1.092px;'>03-8 CIVICS &amp; ECONOMICS</span>
<span class="t" style='left:247.92px;top:380.68px;font:normal normal 9.6px/12px "DejaVu Sans","Liberation Sans",sans-serif;color:#3a5fcd;letter-spacing:0.820px;'>04-GERMAN 2</span>
<span class="t" style='left:247.92px;top:399.68px;font:normal normal 9.6px/12px "DejaVu Sans","Liberation Sans",sans-serif;color:#3a5fcd;letter-spacing:1.008px;'>05-PHYSICAL SCIENCE 8H</span>
<span class="t" style='left:247.92px;top:417.68px;font:normal normal 9.6px/12px "DejaVu Sans","Liberation Sans",sans-serif;color:#3a5fcd;letter-spacing:1.138px;'>06-8 RESOURCE</span>
<span class="t" style='left:247.92px;top:434.68px;font:normal normal 9.6px/12px "DejaVu Sans","Liberation Sans",sans-serif;color:#3a5fcd;letter-spacing:0.860px;'>07-8 BAND</span>
<span class="t" style='left:247.92px;top:453.68px;font:normal normal 9.6px/12px "DejaVu Sans","Liberation Sans",sans-serif;color:#3a5fcd;letter-spacing:0.929px;'>08-ENGLISH 8H</span>
<span class="t" style='left:627.81px;top:323.85px;font:normal normal 12px/16px "DejaVu Sans","Liberation Sans",sans-serif;color:#3a5fcd;letter-spacing:1.059px;'>99</span>
<span class="t" style='left:653.45px;top:323.85px;font:normal normal 12px/16px "DejaVu Sans","Liberation Sans",sans-serif;color:#3a5fcd;letter-spacing:-0.059px;'>A+</span>
<span class="t" style='left:645.18px;top:321.95px;font:normal normal 14.6px/19px "DejaVu Sans","Liberation Sans",sans-serif;color:#3a5fcd;letter-spacing:0.000px;'>/</span>
<span class="t" style='left:743.04px;top:321.95px;font:normal normal 14.6px/19px "DejaVu Sans","Liberation Sans",sans-serif;color:#444;letter-spacing:0.000px;'>/</span>
<span class="t" style='left:879.04px;top:321.95px;font:normal normal 14.6px/19px "DejaVu Sans","Liberation Sans",sans-serif;color:#444;letter-spacing:0.000px;'>/</span>
<span class="t" style='left:1020.64px;top:321.95px;font:normal normal 14.6px/19px "DejaVu Sans","Liberation Sans",sans-serif;color:#444;letter-spacing:0.000px;'>/</span>
<span class="t" style='left:1125.42px;top:321.95px;font:normal normal 14.6px/19px "DejaVu Sans","Liberation Sans",sans-serif;color:#444;letter-spacing:0.000px;'>/</span>
<span class="t" style='left:1261.38px;top:321.95px;font:normal normal 14.6px/19px "DejaVu Sans","Liberation Sans",sans-serif;color:#444;letter-spacing:0.000px;'>/</span>
<span class="t" style='left:627.79px;top:341.85px;font:normal normal 12px/16px "DejaVu Sans","Liberation Sans",sans-serif;color:#3a5fcd;letter-spacing:1.173px;'>87</span>
<span class="t" style='left:653.75px;top:341.85px;font:normal normal 12px/16px "DejaVu Sans","Liberation Sans",sans-serif;color:#3a5fcd;letter-spacing:-0.386px;'>B+</span>
<span class="t" style='left:645.18px;top:339.95px;font:normal normal 14.6px/19px "DejaVu Sans","Liberation Sans",sans-serif;color:#3a5fcd;letter-spacing:0.000px;'>/</span>
<span class="t" style='left:743.04px;top:339.95px;font:normal normal 14.6px/19px "DejaVu Sans","Liberation Sans",sans-serif;color:#444;letter-spacing:0.000px;'>/</span>
<span class="t" style='left:879.04px;top:339.95px;font:normal normal 14.6px/19px "DejaVu Sans","Liberation Sans",sans-serif;color:#444;letter-spacing:0.000px;'>/</span>
<span class="t" style='left:1020.64px;top:339.95px;font:normal normal 14.6px/19px "DejaVu Sans","Liberation Sans",sans-serif;color:#444;letter-spacing:0.000px;'>/</span>
<span class="t" style='left:1125.42px;top:339.95px;font:normal normal 14.6px/19px "DejaVu Sans","Liberation Sans",sans-serif;color:#444;letter-spacing:0.000px;'>/</span>
<span class="t" style='left:1261.38px;top:339.95px;font:normal normal 14.6px/19px "DejaVu Sans","Liberation Sans",sans-serif;color:#444;letter-spacing:0.000px;'>/</span>
<span class="t" style='left:619.67px;top:360.85px;font:normal normal 12px/16px "DejaVu Sans","Liberation Sans",sans-serif;color:#3a5fcd;letter-spacing:0.900px;'>101</span>
<span class="t" style='left:653.45px;top:360.85px;font:normal normal 12px/16px "DejaVu Sans","Liberation Sans",sans-serif;color:#3a5fcd;letter-spacing:-0.059px;'>A+</span>
<span class="t" style='left:645.18px;top:358.95px;font:normal normal 14.6px/19px "DejaVu Sans","Liberation Sans",sans-serif;color:#3a5fcd;letter-spacing:0.000px;'>/</span>
<span class="t" style='left:743.04px;top:358.95px;font:normal normal 14.6px/19px "DejaVu Sans","Liberation Sans",sans-serif;color:#444;letter-spacing:0.000px;'>/</span>
<span class="t" style='left:879.04px;top:358.95px;font:normal normal 14.6px/19px "DejaVu Sans","Liberation Sans",sans-serif;color:#444;letter-spacing:0.000px;'>/</span>
<span class="t" style='left:1020.64px;top:358.95px;font:normal normal 14.6px/19px "DejaVu Sans","Liberation Sans",sans-serif;color:#444;letter-spacing:0.000px;'>/</span>
<span class="t" style='left:1125.42px;top:358.95px;font:normal normal 14.6px/19px "DejaVu Sans","Liberation Sans",sans-serif;color:#444;letter-spacing:0.000px;'>/</span>
<span class="t" style='left:1261.38px;top:358.95px;font:normal normal 14.6px/19px "DejaVu Sans","Liberation Sans",sans-serif;color:#444;letter-spacing:0.000px;'>/</span>
<span class="t" style='left:627.81px;top:379.85px;font:normal normal 12px/16px "DejaVu Sans","Liberation Sans",sans-serif;color:#3a5fcd;letter-spacing:1.188px;'>93</span>
<span class="t" style='left:653.45px;top:379.85px;font:normal normal 12px/16px "DejaVu Sans","Liberation Sans",sans-serif;color:#3a5fcd;letter-spacing:0.000px;'>A</span>
<span class="t" style='left:645.18px;top:377.95px;font:normal normal 14.6px/19px "DejaVu Sans","Liberation Sans",sans-serif;color:#3a5fcd;letter-spacing:0.000px;'>/</span>
<span class="t" style='left:743.04px;top:377.95px;font:normal normal 14.6px/19px "DejaVu Sans","Liberation Sans",sans-serif;color:#444;letter-spacing:0.000px;'>/</span>
<span class="t" style='left:879.04px;top:377.95px;font:normal normal 14.6px/19px "DejaVu Sans","Liberation Sans",sans-serif;color:#444;letter-spacing:0.000px;'>/</span>
<span class="t" style='left:1020.64px;top:377.95px;font:normal normal 14.6px/19px "DejaVu Sans","Liberation Sans",sans-serif;color:#444;letter-spacing:0.000px;'>/</span>
<span class="t" style='left:1125.42px;top:377.95px;font:normal normal 14.6px/19px "DejaVu Sans","Liberation Sans",sans-serif;color:#444;letter-spacing:0.000px;'>/</span>
<span class="t" style='left:1261.38px;top:377.95px;font:normal normal 14.6px/19px "DejaVu Sans","Liberation Sans",sans-serif;color:#444;letter-spacing:0.000px;'>/</span>
<span class="t" style='left:627.79px;top:397.85px;font:normal normal 12px/16px "DejaVu Sans","Liberation Sans",sans-serif;color:#3a5fcd;letter-spacing:1.173px;'>88</span>
<span class="t" style='left:653.75px;top:397.85px;font:normal normal 12px/16px "DejaVu Sans","Liberation Sans",sans-serif;color:#3a5fcd;letter-spacing:-0.386px;'>B+</span>
<span class="t" style='left:645.18px;top:395.95px;font:normal normal 14.6px/19px "DejaVu Sans","Liberation Sans",sans-serif;color:#3a5fcd;letter-spacing:0.000px;'>/</span>
<span class="t" style='left:743.04px;top:395.95px;font:normal normal 14.6px/19px "DejaVu Sans","Liberation Sans",sans-serif;color:#444;letter-spacing:0.000px;'>/</span>
<span class="t" style='left:879.04px;top:395.95px;font:normal normal 14.6px/19px "DejaVu Sans","Liberation Sans",sans-serif;color:#444;letter-spacing:0.000px;'>/</span>
<span class="t" style='left:1020.64px;top:395.95px;font:normal normal 14.6px/19px "DejaVu Sans","Liberation Sans",sans-serif;color:#444;letter-spacing:0.000px;'>/</span>
<span class="t" style='left:1125.42px;top:395.95px;font:normal normal 14.6px/19px "DejaVu Sans","Liberation Sans",sans-serif;color:#444;letter-spacing:0.000px;'>/</span>
<span class="t" style='left:1261.38px;top:395.95px;font:normal normal 14.6px/19px "DejaVu Sans","Liberation Sans",sans-serif;color:#444;letter-spacing:0.000px;'>/</span>
<span class="t" style='left:645.18px;top:413.95px;font:normal normal 14.6px/19px "DejaVu Sans","Liberation Sans",sans-serif;color:#3a5fcd;letter-spacing:0.000px;'>/</span>
<span class="t" style='left:743.04px;top:413.95px;font:normal normal 14.6px/19px "DejaVu Sans","Liberation Sans",sans-serif;color:#444;letter-spacing:0.000px;'>/</span>
<span class="t" style='left:879.04px;top:413.95px;font:normal normal 14.6px/19px "DejaVu Sans","Liberation Sans",sans-serif;color:#444;letter-spacing:0.000px;'>/</span>
<span class="t" style='left:1020.64px;top:413.95px;font:normal normal 14.6px/19px "DejaVu Sans","Liberation Sans",sans-serif;color:#444;letter-spacing:0.000px;'>/</span>
<span class="t" style='left:1125.42px;top:413.95px;font:normal normal 14.6px/19px "DejaVu Sans","Liberation Sans",sans-serif;color:#444;letter-spacing:0.000px;'>/</span>
<span class="t" style='left:1261.38px;top:413.95px;font:normal normal 14.6px/19px "DejaVu Sans","Liberation Sans",sans-serif;color:#444;letter-spacing:0.000px;'>/</span>
<span class="t" style='left:627.81px;top:433.85px;font:normal normal 12px/16px "DejaVu Sans","Liberation Sans",sans-serif;color:#3a5fcd;letter-spacing:1.153px;'>98</span>
<span class="t" style='left:653.45px;top:433.85px;font:normal normal 12px/16px "DejaVu Sans","Liberation Sans",sans-serif;color:#3a5fcd;letter-spacing:-0.059px;'>A+</span>
<span class="t" style='left:645.18px;top:431.95px;font:normal normal 14.6px/19px "DejaVu Sans","Liberation Sans",sans-serif;color:#3a5fcd;letter-spacing:0.000px;'>/</span>
<span class="t" style='left:743.04px;top:431.95px;font:normal normal 14.6px/19px "DejaVu Sans","Liberation Sans",sans-serif;color:#444;letter-spacing:0.000px;'>/</span>
<span class="t" style='left:879.04px;top:431.95px;font:normal normal 14.6px/19px "DejaVu Sans","Liberation Sans",sans-serif;color:#444;letter-spacing:0.000px;'>/</span>
<span class="t" style='left:1020.64px;top:431.95px;font:normal normal 14.6px/19px "DejaVu Sans","Liberation Sans",sans-serif;color:#444;letter-spacing:0.000px;'>/</span>
<span class="t" style='left:1125.42px;top:431.95px;font:normal normal 14.6px/19px "DejaVu Sans","Liberation Sans",sans-serif;color:#444;letter-spacing:0.000px;'>/</span>
<span class="t" style='left:1261.38px;top:431.95px;font:normal normal 14.6px/19px "DejaVu Sans","Liberation Sans",sans-serif;color:#444;letter-spacing:0.000px;'>/</span>
<span class="t" style='left:627.81px;top:452.85px;font:normal normal 12px/16px "DejaVu Sans","Liberation Sans",sans-serif;color:#3a5fcd;letter-spacing:1.243px;'>92</span>
<span class="t" style='left:653.45px;top:452.85px;font:normal normal 12px/16px "DejaVu Sans","Liberation Sans",sans-serif;color:#3a5fcd;letter-spacing:1.473px;'>A-</span>
<span class="t" style='left:645.18px;top:450.95px;font:normal normal 14.6px/19px "DejaVu Sans","Liberation Sans",sans-serif;color:#3a5fcd;letter-spacing:0.000px;'>/</span>
<span class="t" style='left:743.04px;top:450.95px;font:normal normal 14.6px/19px "DejaVu Sans","Liberation Sans",sans-serif;color:#444;letter-spacing:0.000px;'>/</span>
<span class="t" style='left:879.04px;top:450.95px;font:normal normal 14.6px/19px "DejaVu Sans","Liberation Sans",sans-serif;color:#444;letter-spacing:0.000px;'>/</span>
<span class="t" style='left:1020.64px;top:450.95px;font:normal normal 14.6px/19px "DejaVu Sans","Liberation Sans",sans-serif;color:#444;letter-spacing:0.000px;'>/</span>
<span class="t" style='left:1125.42px;top:450.95px;font:normal normal 14.6px/19px "DejaVu Sans","Liberation Sans",sans-serif;color:#444;letter-spacing:0.000px;'>/</span>
<span class="t" style='left:1261.38px;top:450.95px;font:normal normal 14.6px/19px "DejaVu Sans","Liberation Sans",sans-serif;color:#444;letter-spacing:0.000px;'>/</span>
<span class="t" style='left:266.35px;top:731.51px;font:normal bold 24.5px/32px "Liberation Sans","DejaVu Sans",sans-serif;color:#fff;letter-spacing:0.000px;'>S</span>
<span class="t" style='left:1294.34px;top:733.04px;font:normal normal 12.3px/16px "Liberation Sans","DejaVu Sans",sans-serif;color:#fff;letter-spacing:-0.370px;'>7:27 PM</span>
<span class="t" style='left:1288.33px;top:749.64px;font:normal normal 12.3px/16px "Liberation Sans","DejaVu Sans",sans-serif;color:#fff;letter-spacing:-0.109px;'>10/3/2012</span>
</body></html>
